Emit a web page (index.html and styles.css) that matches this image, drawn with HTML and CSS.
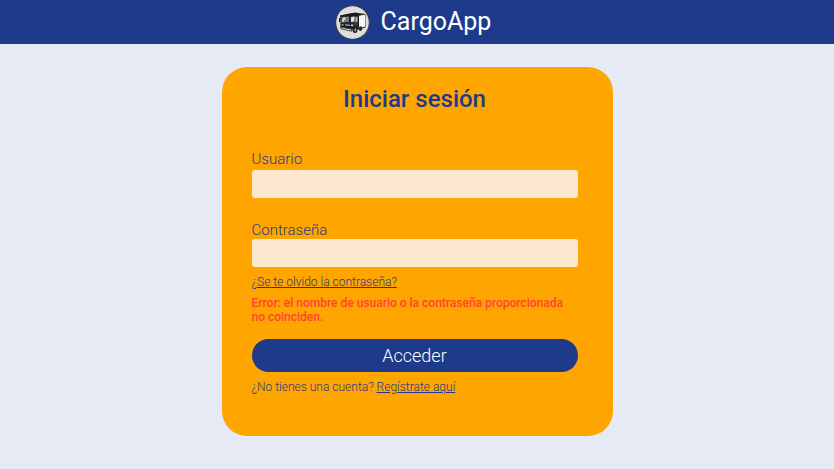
FILE: index.html
```html
<!DOCTYPE html>
<html lang="es">
<head>
<meta charset="utf-8">
<meta name="viewport" content="width=device-width, initial-scale=1">
<title>CargoApp</title>
<link rel="stylesheet" href="styles.css">
</head>
<body>
<header class="topbar">
  <svg class="logo" viewBox="0 0 35 35" aria-hidden="true">
    <circle cx="17.500" cy="17.500" r="16.800" fill="#dededc" stroke="#35373c" stroke-width="1"/>
    <path d="M5 10.500 20 7.500 30.500 9v13.500L24 24.500 20 25 5.500 22z" fill="#303234"/>
    <path d="M5.500 10.500 18 8l5 .8-.5 2.200-16 1z" fill="#17191b"/>
    <path d="M24 10.500l6-.7v11.700l-6 1.800z" fill="#f5f5f4"/>
    <path d="M20 8.500l9.500 1-5.500 1-3.500-.6z" fill="#17191b"/>
    <path d="M6.500 12.200l7.500-.6v5.200l-7.500.6z" fill="#77797a"/>
    <path d="M8 12.500l3-.3-2.500 4.600-1.500.1zM16 12l3.500-.4v5L16 17z" fill="#e4e4e2"/>
    <path d="M20.500 12l2-.2v5l-2 .7z" fill="#b5b6b5"/>
    <path d="M5.500 18.500h12.500l1 4-2 1L6 21.800z" fill="#1a1c1e"/>
    <path d="M6.500 19.300l2 .1v1.200l-2-.3zM10 19.500l5 .2v1l-5-.4zM16 19.500h2v1.700l-2-.2zM6 22.500l10 2 .2 1-10-2z" fill="#e4e4e2"/>
    <path d="M5.500 22l11 2.200v2L6 23.800z" fill="none" stroke="#242628" stroke-width=".8"/>
    <ellipse cx="20" cy="24.700" rx="2.500" ry="3.200" fill="#17191b"/>
    <ellipse cx="20.300" cy="24.900" rx="1" ry="1.600" fill="#a5a6a6"/>
    <ellipse cx="25.500" cy="23.700" rx="1.700" ry="2.400" fill="#242628"/>
    <path d="M4.500 13v4M14.800 11.500v6M23.500 10v12" stroke="#17191b" fill="none"/>
  </svg>
  <span class="brand">CargoApp</span>
</header>
<main class="page">
  <form class="card">
    <h1 class="title">Iniciar sesión</h1>
    <div class="field">
      <label for="user">Usuario</label>
      <input id="user" type="text" autocomplete="username">
    </div>
    <div class="field field-password">
      <label for="password">Contraseña</label>
      <input id="password" type="password" autocomplete="current-password">
    </div>
    <a class="forgot" href="#">¿Se te olvido la contraseña?</a>
    <p class="error" role="alert">Error: el nombre de usuario o la contraseña proporcionada no coinciden.</p>
    <button class="submit" type="button">Acceder</button>
    <p class="signup">¿No tienes una cuenta? <a href="#">Regístrate aquí</a></p>
  </form>
</main>
</body>
</html>
```
FILE: styles.css
```css
* {
  box-sizing: border-box;
}

body {
  margin: 0;
  min-height: 100vh;
  background: #e5eaf5;
  color: #1e3a8a;
  font-family: Roboto, "Liberation Sans", sans-serif;
  font-weight: 300;
}

.topbar {
  display: flex;
  align-items: center;
  justify-content: center;
  gap: 11px;
  height: 44px;
  padding-right: 8px;
  background: #1e3a8a;
}

.logo {
  width: 35px;
  height: 35px;
}

.brand {
  color: #fff;
  font-size: 25px;
  font-weight: 400;
  line-height: 28px;
}

.page {
  padding: 23px 16px 31px;
}

.card {
  display: flex;
  flex-direction: column;
  max-width: 391px;
  margin: 0 auto;
  padding: 16px 35px 42px 30px;
  border-radius: 25px;
  background: #ffa500;
}

.title {
  margin: 0 0 36px;
  font-size: 24px;
  font-weight: 500;
  line-height: 32px;
  text-align: center;
}

.field {
  display: flex;
  flex-direction: column;
  gap: 3px;
  margin-bottom: 24px;
}

.field-password {
  gap: 1px;
  margin-bottom: 8px;
}

.field label {
  font-size: 15px;
  line-height: 16px;
}

.field input {
  width: 100%;
  height: 28px;
  padding: 0 8px;
  border: 0;
  border-radius: 3px;
  background: #fce8cf;
  color: #1e3a8a;
  font: inherit;
}

.forgot,
.error,
.signup {
  margin: 0;
  font-size: 12px;
  line-height: 14px;
}

.forgot,
.signup a {
  color: inherit;
}

.forgot {
  align-self: flex-start;
}

.error {
  margin: 7px 0 15px;
  color: #ff4238;
  font-weight: 500;
}

.submit {
  height: 33px;
  margin-bottom: 8px;
  border: 0;
  border-radius: 17px;
  background: #1e3a8a;
  color: #fff;
  font: inherit;
  font-size: 18px;
}
```
